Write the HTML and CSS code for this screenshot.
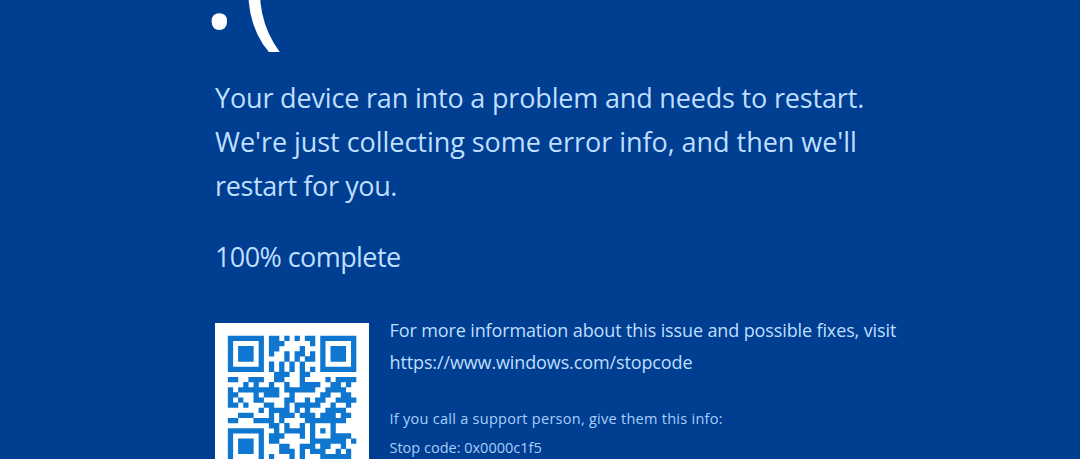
FILE: index.html
```html
<!DOCTYPE html>
<html lang="en">
<head>
    <meta charset="UTF-8">
    <meta name="viewport" content="width=device-width, initial-scale=1.0">
    <title>Stop error</title>
    <link rel="stylesheet" href="styles.css">
</head>
<body>
    <main class="screen">
        <div class="face"><span class="eyes">:</span><span class="mouth">(</span></div>
        <p class="message">
            <span class="line line-1">Your device ran into a problem and needs to restart.</span>
            <span class="line line-2">We're just collecting some error info, and then we'll</span>
            <span class="line line-3">restart for you.</span>
        </p>
        <p class="progress">100% complete</p>
        <div class="details">
            <svg class="qr" id="qr" viewBox="-2.5 -2.5 30 30"></svg>
            <div class="info">
                <p class="more">
                    <span class="line">For more information about this issue and possible fixes, visit</span>
                    <span class="line">https://www.windows.com/stopcode</span>
                </p>
                <p class="support">
                    <span class="line support-title">If you call a support person, give them this info:</span>
                    <span class="line">Stop code: 0x0000c1f5</span>
                </p>
            </div>
        </div>
    </main>
    <script src="qr.js"></script>
</body>
</html>
```
FILE: styles.css
```css
* {
    box-sizing: border-box;
}

body {
    margin: 0;
    height: 459px;
    overflow: hidden;
    background: #003e92;
    color: #bfdfff;
    font-family: "Open Sans", "Noto Sans", sans-serif;
}
.screen {
    padding-left: 215px;
}
p {
    margin: 0;
}
.line {
    display: block;
    white-space: nowrap;
}

/* the top of the face runs off the screen */
.face {
    display: flex;
    align-items: flex-start;
    height: 76px;
    margin: -94px 0 94px -13px;
    color: #fff;
    font-size: 140px;
    line-height: 1;
}
.eyes {
    font-size: 132px;
    line-height: 130px;
    margin-top: 6px;
}
.mouth {
    margin-left: 6px;
}

.message {
    font-size: 27px;
    line-height: 44px;
}
.line-1 {
    letter-spacing: -0.17px;
}
.line-2 {
    letter-spacing: -0.04px;
}
.line-3 {
    letter-spacing: -0.38px;
}
.progress {
    margin-top: 27px;
    font-size: 27px;
    line-height: 44px;
    letter-spacing: -0.58px;
}
.details {
    display: flex;
    gap: 20.5px;
    margin-top: 44px;
}
.qr {
    width: 154px;
    height: 154px;
    background: #fff;
}
.more {
    margin-top: -9px;
    font-size: 18px;
    line-height: 32px;
    letter-spacing: -0.12px;
}
.support {
    margin-top: 26px;
    color: #a9cefa;
    font-size: 14.5px;
    line-height: 29px;
}
.support-title {
    letter-spacing: 0.27px;
}
```
FILE: qr.js
```js
// QR code, version 2, level L, mask 4
const SIZE = 25;

function codewords(text) {
    let bits = '0100' + text.length.toString(2).padStart(8, '0');
    for (const ch of text) bits += ch.charCodeAt(0).toString(2).padStart(8, '0');
    bits += '0000'.slice(0, 272 - bits.length);
    while (bits.length % 8) bits += '0';
    const data = bits.match(/.{8}/g).map(b => parseInt(b, 2));
    for (let i = 0; data.length < 34; i++) data.push(i % 2 ? 17 : 236);
    return data.concat(remainder(data, 10));
}

function multiply(a, b) {
    let z = 0;
    for (let i = 7; i >= 0; i--) {
        z = (z << 1) ^ ((z >> 7) * 0x11d);
        z ^= ((b >> i) & 1) * a;
    }
    return z;
}

// Reed-Solomon remainder
function remainder(data, degree) {
    const gen = new Array(degree).fill(0);
    gen[degree - 1] = 1;
    let root = 1;
    for (let i = 0; i < degree; i++) {
        for (let j = 0; j < degree; j++) {
            gen[j] = multiply(gen[j], root);
            if (j + 1 < degree) gen[j] ^= gen[j + 1];
        }
        root = multiply(root, 2);
    }
    const rest = new Array(degree).fill(0);
    for (const b of data) {
        const factor = b ^ rest.shift();
        rest.push(0);
        gen.forEach((g, i) => rest[i] ^= multiply(g, factor));
    }
    return rest;
}

function build(text) {
    const grid = Array.from({ length: SIZE }, () => new Array(SIZE).fill(null));
    const square = (row, col, reach, light) => {
        for (let y = -reach; y <= reach; y++) {
            for (let x = -reach; x <= reach; x++) {
                if (!grid[row + y] || grid[row + y][col + x] === undefined) continue;
                grid[row + y][col + x] = !light.includes(Math.max(Math.abs(x), Math.abs(y)));
            }
        }
    };
    for (let i = 0; i < SIZE; i++) grid[6][i] = grid[i][6] = i % 2 === 0;
    square(3, 3, 4, [2, 4]);
    square(3, 21, 4, [2, 4]);
    square(21, 3, 4, [2, 4]);
    square(18, 18, 2, [1]);

    // Format bits, both copies
    const format = [...'110011000101111'].map(b => b === '1');
    const first = [[8, 0], [8, 1], [8, 2], [8, 3], [8, 4], [8, 5], [8, 7], [8, 8],
        [7, 8], [5, 8], [4, 8], [3, 8], [2, 8], [1, 8], [0, 8]];
    format.forEach((bit, i) => {
        grid[first[i][0]][first[i][1]] = bit;
        if (i < 7) grid[SIZE - 1 - i][8] = bit;
        else grid[8][SIZE - 15 + i] = bit;
    });
    grid[SIZE - 8][8] = true;

    // Zigzag through the free modules
    const bits = codewords(text).map(b => b.toString(2).padStart(8, '0')).join('');
    let n = 0;
    for (let right = SIZE - 1; right > 0; right -= 2) {
        if (right === 6) right = 5;
        for (let v = 0; v < SIZE; v++) {
            const up = ((right + 1) & 2) === 0;
            const row = up ? SIZE - 1 - v : v;
            for (const col of [right, right - 1]) {
                if (grid[row][col] !== null) continue;
                const mask = (Math.floor(row / 2) + Math.floor(col / 3)) % 2 === 0;
                grid[row][col] = (bits[n++] === '1') !== mask;
            }
        }
    }
    return grid;
}

let d = '';
build('https://www.windows.com/stopcode').forEach((line, row) => {
    line.forEach((dark, col) => {
        if (dark) d += `M${col} ${row}h1.03v1.03h-1.03z`;
    });
});
document.getElementById('qr').innerHTML = `<path fill="#0f77cf" d="${d}"/>`;
```
